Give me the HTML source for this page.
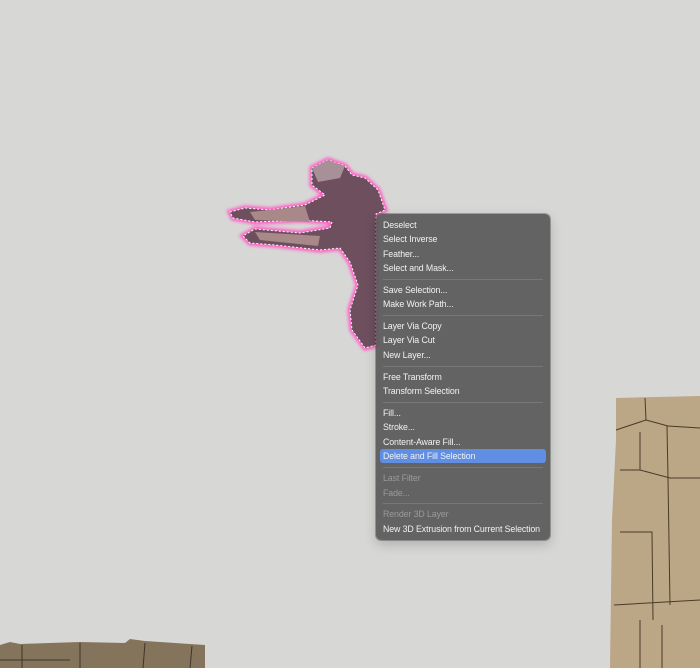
<!DOCTYPE html>
<html><head><style>
body{margin:0;width:700px;height:668px;overflow:hidden;background:#d7d8d6;position:relative;font-family:"Liberation Sans",sans-serif}
.menu{position:absolute;left:376px;top:214px;width:174px;height:326px;border-radius:5px;background:rgba(88,86,86,0.9);box-shadow:0 0 0 1px rgba(0,0,0,.25),0 4px 12px rgba(0,0,0,.2)}
.it{position:absolute;left:7px;font-size:8.8px;letter-spacing:-0.1px;color:#f2f2f2;line-height:13px;white-space:nowrap}
.dis{color:#9a9a9a}
.sep{position:absolute;left:7px;right:7px;height:1px;background:#777}
.hl{position:absolute;left:4px;right:4px;height:14px;background:#5f8ee3;border-radius:3px}
</style></head><body>
<svg width="700" height="668" style="position:absolute;left:0;top:0">
<defs><filter id="g"><feGaussianBlur stdDeviation="1.5"/></filter></defs>
<path d="M312,168 L328,160 L345,166 L352,175 L365,178 L378,190 L385,210 L376,214 L376,345 L365,348 L352,330 L350,310 L358,285 L350,262 L340,248 L320,250 L275,245 L250,243 L243,236 L255,229 L300,233 L330,228 L332,222 L300,220 L255,222 L233,218 L230,212 L245,208 L270,210 L305,205 L325,195 L312,185 Z" fill="none" stroke="#ff5cc4" stroke-width="5" filter="url(#g)"/>
<path d="M312,168 L328,160 L345,166 L352,175 L365,178 L378,190 L385,210 L376,214 L376,345 L365,348 L352,330 L350,310 L358,285 L350,262 L340,248 L320,250 L275,245 L250,243 L243,236 L255,229 L300,233 L330,228 L332,222 L300,220 L255,222 L233,218 L230,212 L245,208 L270,210 L305,205 L325,195 L312,185 Z" fill="#6e4f5e" stroke="#fff" stroke-width="1" stroke-dasharray="2,2"/>
<path d="M250,212 L305,206 L310,222 L255,220Z M255,232 L320,236 L318,246 L260,240Z" fill="#a88888"/>
<path d="M312,168 L328,160 L345,166 L340,178 L318,182Z" fill="#a89098"/>
<path d="M616,398 L700,396 L700,668 L610,668 L612,520 L616,440Z" fill="#bba685"/>
<path d="M645,398 L646,420 L616,430 M646,420 L668,426 L700,428 M640,432 L640,470 L670,478 L700,478 M667,426 L668,478 M620,470 L640,470 M668,478 L670,605 M620,532 L652,532 L653,620 M614,605 L700,600 M640,620 L640,668 M662,625 L662,668" stroke="#4a3a2a" stroke-width="1" fill="none"/>
<path d="M0,645 L10,642 L20,644 L80,642 L125,643 L130,639 L145,641 L205,645 L205,668 L0,668Z" fill="#85745c"/>
<path d="M22,645 L22,668 M80,643 L80,668 M145,643 L143,668 M192,646 L190,668 M0,660 L70,660" stroke="#3e3428" stroke-width="1" fill="none"/>
</svg>
<div class="menu">
<div class="it" style="top:5px">Deselect</div>
<div class="it" style="top:19px">Select Inverse</div>
<div class="it" style="top:34px">Feather...</div>
<div class="it" style="top:48px">Select and Mask...</div>
<div class="sep" style="top:65px"></div>
<div class="it" style="top:70px">Save Selection...</div>
<div class="it" style="top:84px">Make Work Path...</div>
<div class="sep" style="top:101px"></div>
<div class="it" style="top:106px">Layer Via Copy</div>
<div class="it" style="top:120px">Layer Via Cut</div>
<div class="it" style="top:135px">New Layer...</div>
<div class="sep" style="top:152px"></div>
<div class="it" style="top:157px">Free Transform</div>
<div class="it" style="top:171px">Transform Selection</div>
<div class="sep" style="top:188px"></div>
<div class="it" style="top:193px">Fill...</div>
<div class="it" style="top:207px">Stroke...</div>
<div class="it" style="top:222px">Content-Aware Fill...</div>
<div class="hl" style="top:235px"></div>
<div class="it" style="top:236px">Delete and Fill Selection</div>
<div class="sep" style="top:253px"></div>
<div class="it dis" style="top:258px">Last Filter</div>
<div class="it dis" style="top:273px">Fade...</div>
<div class="sep" style="top:289px"></div>
<div class="it dis" style="top:294px">Render 3D Layer</div>
<div class="it" style="top:309px">New 3D Extrusion from Current Selection</div>
</div>
</body></html>
